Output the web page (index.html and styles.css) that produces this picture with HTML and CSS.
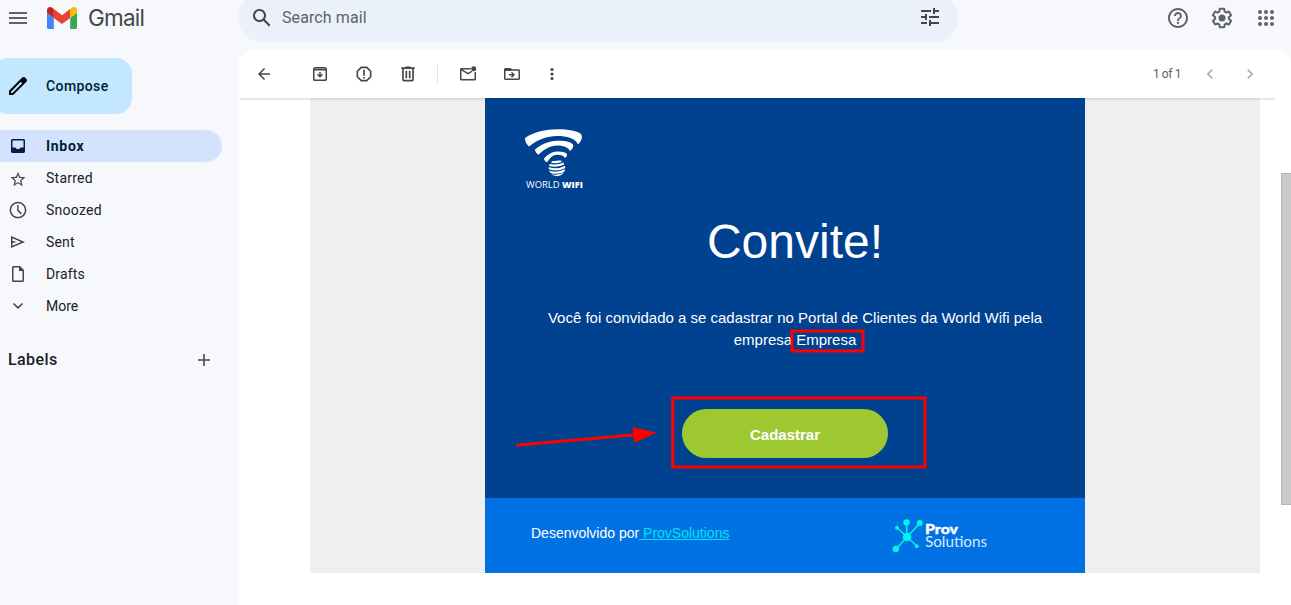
FILE: index.html
```html
<!DOCTYPE html>
<html lang="en">
<head>
<meta charset="utf-8">
<title>Gmail</title>
<link rel="stylesheet" href="styles.css">
</head>
<body>
<div class="app">
  <header class="header">
    <div class="brand">
      <svg class="icon24 menu" viewBox="0 0 24 24"><path d="M3 18h18v-2H3v2zm0-5h18v-2H3v2zm0-7v2h18V6H3z"/></svg>
      <svg class="brand-mark" viewBox="52 42 88 66"><path fill="#4285f4" d="M58 108h14V74L52 59v43c0 3.32 2.69 6 6 6"/><path fill="#34a853" d="M120 108h14c3.32 0 6-2.69 6-6V59l-20 15"/><path fill="#fbbc04" d="M120 48v26l20-15v-8c0-7.42-8.47-11.65-14.4-7.2"/><path fill="#ea4335" d="M72 74V48l24 18 24-18v26L96 92"/><path fill="#c5221f" d="M52 51v8l20 15V48l-5.6-4.2c-5.94-4.45-14.4-.22-14.4 7.2"/></svg>
      <span class="brand-name">Gmail</span>
    </div>
    <div class="search">
      <svg class="icon24" viewBox="0 0 24 24"><path d="M20.49 19l-5.73-5.73C15.53 12.2 16 10.91 16 9.5 16 5.91 13.09 3 9.5 3S3 5.91 3 9.5 5.91 16 9.5 16c1.41 0 2.7-.47 3.77-1.24L19 20.49 20.49 19zM5 9.5C5 7.01 7.01 5 9.5 5S14 7.01 14 9.5 11.99 14 9.5 14 5 11.99 5 9.5z"/></svg>
      <span class="search-text">Search mail</span>
      <svg class="icon24 tune" viewBox="0 0 24 24"><path d="M3 17v2h6v-2H3zM3 5v2h10V5H3zm10 16v-2h8v-2h-8v-2h-2v6h2zM7 9v2H3v2h4v2h2V9H7zm14 4v-2H11v2h10zm-6-4h2V7h4V5h-4V3h-2v6z"/></svg>
    </div>
    <div class="header-actions">
      <svg class="icon24" viewBox="0 0 24 24"><path d="M11 18h2v-2h-2v2zm1-16C6.48 2 2 6.48 2 12s4.48 10 10 10 10-4.480 10-10S17.520 2 12 2zm0 18c-4.410 0-8-3.590-8-8s3.590-8 8-8 8 3.590 8 8-3.590 8-8 8zm0-14c-2.210 0-4 1.790-4 4h2c0-1.100.9-2 2-2s2 .9 2 2c0 2-3 1.750-3 5h2c0-2.250 3-2.500 3-5 0-2.210-1.790-4-4-4z"/></svg>
      <svg class="icon24" viewBox="0 0 24 24"><path d="M13.850 22.250h-3.700c-.74 0-1.360-.54-1.450-1.270l-.27-1.890c-.27-.14-.53-.29-.79-.46l-1.800.72c-.7.26-1.470-.03-1.810-.65L2.200 15.530c-.35-.66-.2-1.440.36-1.880l1.530-1.190c-.01-.15-.02-.3-.02-.46 0-.15.010-.31.020-.46l-1.520-1.190c-.59-.45-.74-1.260-.37-1.880l1.850-3.190c.34-.62 1.110-.9 1.790-.63l1.810.73c.26-.17.520-.32.780-.46l.27-1.910c.09-.7.710-1.250 1.440-1.250h3.700c.74 0 1.360.54 1.450 1.270l.27 1.890c.27.140.53.290.79.460l1.800-.72c.71-.26 1.480.03 1.820.65l1.840 3.180c.36.66.2 1.440-.36 1.880l-1.520 1.190c.01.150.020.3.020.460s-.01.310-.02.460l1.520 1.190c.56.450.72 1.230.37 1.860l-1.860 3.220c-.34.620-1.110.9-1.800.63l-1.800-.72c-.26.170-.52.320-.78.460l-.27 1.910c-.1.680-.72 1.220-1.460 1.220zm-3.230-2h2.760l.37-2.550.53-.22c.44-.18.880-.44 1.340-.78l.45-.34 2.380.96 1.380-2.400-2.030-1.580.07-.56c.03-.26.060-.51.060-.78s-.03-.53-.06-.78l-.07-.56 2.030-1.580-1.390-2.400-2.390.96-.45-.35c-.42-.32-.87-.58-1.330-.77l-.52-.22-.37-2.550h-2.760l-.37 2.550-.53.210c-.44.190-.88.440-1.340.79l-.45.330-2.380-.95-1.390 2.390 2.030 1.580-.07.56a7 7 0 0 0-.06.790c0 .26.020.53.060.78l.07.560-2.030 1.580 1.380 2.400 2.390-.96.450.35c.43.330.86.580 1.330.77l.53.220z"/><circle cx="12" cy="12" r="3.500"/></svg>
      <svg class="icon24" viewBox="0 0 24 24"><g><circle cx="6" cy="6" r="2"/><circle cx="12" cy="6" r="2"/><circle cx="18" cy="6" r="2"/><circle cx="6" cy="12" r="2"/><circle cx="12" cy="12" r="2"/><circle cx="18" cy="12" r="2"/><circle cx="6" cy="18" r="2"/><circle cx="12" cy="18" r="2"/><circle cx="18" cy="18" r="2"/></g></svg>
    </div>
  </header>

  <aside class="sidebar">
    <div class="compose">
      <svg class="icon24" viewBox="0 0 24 24"><path d="M20.410 4.940l-1.350-1.350c-.78-.78-2.050-.78-2.830 0L3 16.820V21h4.180L20.410 7.770c.79-.78.790-2.050 0-2.830zM6.410 19.060L5 19v-1.360l9.820-9.820 1.410 1.410-9.820 9.830z"/></svg>
      <span class="compose-text">Compose</span>
    </div>
    <nav class="nav">
      <div class="nav-item active"><svg class="icon20" viewBox="0 0 20 20"><path d="M4.500 3h11c.8 0 1.500.7 1.500 1.500v11c0 .8-.7 1.500-1.500 1.500h-11c-.8 0-1.500-.7-1.500-1.500v-11C3 3.700 3.700 3 4.500 3zm0 1.500v7h3c.5 1 1.400 1.500 2.500 1.500s2-.5 2.500-1.500h3v-7z"/></svg><span class="t-inbox">Inbox</span></div>
      <div class="nav-item"><svg class="icon20 star" viewBox="0 0 24 24"><path d="M22 9.740l-7.190-.62L12 2.500 9.190 9.130 2 9.740l5.460 4.730-1.640 7.030L12 17.770l6.180 3.730-1.630-7.030L22 9.740zM12 15.900l-3.760 2.270 1-4.280-3.320-2.880 4.380-.38L12 6.600l1.710 4.040 4.380.38-3.320 2.880 1 4.280L12 15.900z"/></svg><span class="t-starred">Starred</span></div>
      <div class="nav-item"><svg class="icon20" viewBox="0 0 24 24"><path d="M12 2C6.500 2 2 6.500 2 12s4.500 10 10 10 10-4.500 10-10S17.500 2 12 2zm0 18.200c-4.500 0-8.200-3.700-8.200-8.200S7.500 3.800 12 3.800s8.200 3.700 8.200 8.200-3.700 8.200-8.200 8.200zM12.700 6H11v7l4.300 4.300 1.300-1.300-3.900-3.900V6z"/></svg><span class="t-snoozed">Snoozed</span></div>
      <div class="nav-item"><svg class="icon20" viewBox="0 0 20 20"><path d="M3 16V4l14 6-14 6zm1.500-2.300L13.100 10 4.500 6.300v2.600L9 10l-4.500 1.100z"/></svg><span class="t-sent">Sent</span></div>
      <div class="nav-item"><svg class="icon20" viewBox="0 0 20 20"><path d="M12 2H5.500C4.700 2 4 2.700 4 3.500v13c0 .8.7 1.500 1.500 1.500h9c.8 0 1.500-.7 1.500-1.500V6l-4-4zM5.500 16.500v-13H11V7h3.500v9.500z"/></svg><span class="t-drafts">Drafts</span></div>
      <div class="nav-item"><svg class="icon20" viewBox="0 0 20 20"><path d="M6.100 6.900L10 10.800l3.900-3.900 1.100 1.100-5 5-5-5z"/></svg><span class="t-more">More</span></div>
    </nav>
    <div class="labels">
      <span class="labels-text">Labels</span>
      <svg class="icon20" viewBox="0 0 20 20"><path d="M9.200 4h1.600v5.200H16v1.600h-5.200V16H9.200v-5.200H4V9.200h5.200z"/></svg>
    </div>
  </aside>

  <main class="main">
    <div class="toolbar">
      <svg class="icon20 back" viewBox="0 0 20 20"><path d="M16 9.250H6.900l4.200-4.200L10 4l-6 6 6 6 1.100-1.050-4.200-4.200H16z"/></svg>
      <svg class="icon20" viewBox="0 0 20 20"><path fill="#9a9c9c" d="M4.500 3.500h11v2h-11z"/><path d="M15.500 3h-11L3 4.800v10.700c0 .8.7 1.500 1.500 1.500h11c.8 0 1.500-.7 1.500-1.500V4.800zM5 4.200h10l.6.8H4.400zM4.500 15.500V6.500h11v9zM9.250 8v3L8 9.800l-1 1 3 3 3-3-1-1L10.750 11V8z"/></svg>
      <svg class="icon20" viewBox="0 0 24 24"><path d="M15.730 3H8.270L3 8.270v7.460L8.270 21h7.460L21 15.730V8.270L15.730 3zM19 14.900L14.900 19H9.100L5 14.900V9.100L9.100 5h5.800L19 9.100v5.800zM11 7h2v7h-2zm0 8.500h2v2h-2z"/></svg>
      <svg class="icon20" viewBox="0 0 24 24"><path d="M15 4V3H9v1H4v2h1v13c0 1.100.9 2 2 2h10c1.100 0 2-.9 2-2V6h1V4h-5zm2 15H7V6h10v13zM9 8h2v9H9zm4 0h2v9h-2z"/></svg>
      <span class="separator"></span>
      <svg class="icon20" viewBox="0 0 20 20"><path d="M18 8v7c0 .8-.7 1.500-1.500 1.500h-13c-.8 0-1.500-.7-1.500-1.500V5.500C2 4.700 2.700 4 3.500 4h9.200v1.500H4.500L10 8.800l3.500-2.100 1 1L10 10.500l-6.500-4V15h13V8z"/><circle cx="15.700" cy="4.800" r="2.500"/></svg>
      <svg class="icon20" viewBox="0 0 20 20"><path d="M16.500 5.200H10L8.500 4h-5C2.700 4 2 4.700 2 5.500V14.500c0 .8.700 1.500 1.500 1.500h13c.8 0 1.500-.7 1.500-1.500v-7.800c0-.8-.7-1.500-1.500-1.500zm0 9.300h-13V6.800h13zM10 13.700l3-3-3-3-1 1 1.200 1.250H7v1.500h3.200L9 12.700z"/><path d="M3 4.500h5.500L10 6.700H3z"/></svg>
      <svg class="icon20 dots" viewBox="0 0 20 20"><circle cx="10" cy="5.500" r="1.600"/><circle cx="10" cy="10" r="1.600"/><circle cx="10" cy="14.500" r="1.600"/></svg>
      <span class="pager">1 of 1</span>
      <svg class="icon20 faint" viewBox="0 0 24 24"><path d="M15.410 7.410L14 6l-6 6 6 6 1.410-1.410L10.830 12z"/></svg>
      <svg class="icon20 faint next" viewBox="0 0 24 24"><path d="M8.590 16.590L10 18l6-6-6-6-1.410 1.410L13.170 12z"/></svg>
    </div>
    <div class="viewport">
      <div class="mail-bg">
        <article class="mail">
          <section class="mail-body">
            <svg class="wifi-logo" viewBox="0 0 60 64" fill="#fff">
              <path d="M0 12C9 6 21 3.300 32 3.300c11 0 21 1.700 24 4.700 2 3 .5 7-3 10.500C51 12.500 42 10 32 10 22 10 12 14 4 20.500 1 18 0 15 0 12z"/>
              <path d="M10 23.500c6-5 14-8.500 22-8.700 8-.3 14 1.200 16 3.700 1 2-.5 4.500-3 6.500-2-4-7-5.500-13-5.500-7 0-13 4-18.500 9.200-2.500-1.700-3.500-3.500-3.500-5.200z"/>
              <path d="M19 32.500c4-4.500 8-6.800 13-7 5-.2 9 .8 10 2.500.4 1.500-.5 2.800-2 4-1.500-2.500-4-3.300-8-3.200-4 .1-7 3-10 7.500-2-1-3-2.300-3-3.800z"/>
              <clipPath id="globe"><circle cx="32" cy="42" r="8.300"/></clipPath>
              <g clip-path="url(#globe)" fill="none" stroke="#fff" stroke-width="2.100"><path d="M26 35.500q6 2 13-2"/><path d="M22 38q10 4 20-2"/><path d="M22 41.500q10 4.500 20-1.500"/><path d="M22 45q10 4 20-1.500"/><path d="M22 48q10 4 20-1.500"/></g>
              <text x="1" y="62.300" font-size="9.500" textLength="33.500" lengthAdjust="spacingAndGlyphs">WORLD</text>
              <text x="37" y="62.300" font-size="9.500" font-weight="800" textLength="21" lengthAdjust="spacingAndGlyphs">WIFI</text>
            </svg>
            <h1 class="title">Convite!</h1>
            <p class="invite">Você foi convidado a se cadastrar no Portal de Clientes da World Wifi pela<br>empresa <span class="company">Empresa</span></p>
            <div class="cta-row"><a class="cta">Cadastrar</a></div>
            <svg class="marks" viewBox="0 0 600 400"><g fill="none" stroke="#f00" stroke-width="3"><rect x="307" y="233" width="71" height="20"/><rect x="187.800" y="300" width="252.200" height="69"/><path d="M31 347.200L150 336.700"/></g><path fill="#f00" d="M147.500 329L171.500 334.800 149 345z"/></svg>
          </section>
          <footer class="mail-footer">
            <span class="credit">Desenvolvido por<a class="credit-link"> ProvSolutions</a></span>
            <svg class="prov-logo" viewBox="0 0 100 40">
              <g stroke="#00f5e6" stroke-width="1.500"><path d="M17 22L16.500 7M17 22L30 8M17 22L7 12.500M17 22L6 34M17 22l10 9"/></g>
              <g fill="#00f5e6"><circle cx="17" cy="22" r="4.300"/><circle cx="16.500" cy="7.500" r="3.200"/><circle cx="29.800" cy="8" r="3"/><circle cx="7" cy="12.800" r="2"/><circle cx="5.800" cy="34" r="3.200"/><circle cx="26.700" cy="31.300" r="2"/></g>
              <g fill="#fff"><text x="35" y="19" font-size="14" font-weight="900" stroke="#fff" stroke-width=".4" textLength="33" lengthAdjust="spacingAndGlyphs">Prov</text><text x="35" y="32" font-size="14.500" fill="#d9ebff" font-weight="400" textLength="62" lengthAdjust="spacingAndGlyphs">Solutions</text></g>
            </svg>
          </footer>
        </article>
      </div>
      <div class="scrollbar"></div>
    </div>
  </main>
</div>
</body>
</html>
```
FILE: styles.css
```css
* { box-sizing: border-box; }
body {
  margin: 0;
  width: 1291px;
  height: 605px;
  overflow: hidden;
  background: #f6f8fc;
  color: #202124;
  font-family: Roboto, "Open Sans", sans-serif;
}
svg { display: block; flex: none; }
.icon24 { width: 24px; height: 24px; fill: #444746; }
.icon20 { width: 20px; height: 20px; fill: #444746; }
.app {
  display: grid;
  grid-template: 50px 555px / 238px 1053px;
}
.header { grid-column: 1 / 3; display: flex; align-items: flex-start; }
.brand {
  display: flex;
  align-items: center;
  width: 238px;
  height: 36px;
  padding-left: 6px;
}
.menu { fill: #5f6368; }
.brand-mark { width: 30px; height: 22.500px; margin-left: 17px; }
.brand-name {
  margin-left: 11px;
  font-family: Inter, sans-serif;
  font-size: 22.500px;
  line-height: 36px;
  letter-spacing: -0.8px;
  color: #444746;
}
.search {
  display: flex;
  align-items: center;
  width: 720px;
  height: 48px;
  margin-top: -6px;
  padding: 0 16px 0 12px;
  border-radius: 24px;
  background: #eaf1fb;
}
.tune { margin-bottom: 2px; }
.search-text {
  flex: 1;
  margin: 0 0 2px 8px;
  font-size: 16px;
  letter-spacing: 0.1px;
  color: #5f6368;
}
.header-actions {
  display: flex;
  gap: 20px;
  margin-left: auto;
  padding: 6px 13px 0 0;
}
.header-actions .icon24 { fill: #5f6368; }
.sidebar { padding-top: 8px; font-size: 14px; }
.compose {
  display: flex;
  align-items: center;
  gap: 16px;
  width: 140px;
  height: 56px;
  margin-left: -8px;
  padding-left: 14px;
  border-radius: 16px;
  background: #c2e7ff;
  color: #001d35;
  font-weight: 500;
}
.compose .icon24 { fill: #000; }
.compose-text { letter-spacing: 0.4px; }
.nav { margin-top: 16px; }
.nav-item {
  display: flex;
  align-items: center;
  gap: 18px;
  width: 222px;
  height: 32px;
  padding-left: 8px;
}
.nav-item.active {
  border-radius: 0 16px 16px 0;
  background: #d3e3fd;
  color: #001d35;
  font-weight: 700;
}
.active .icon20 { fill: #041e49; }
.star { width: 18px; height: 18px; margin: 2px 1px 0; }
.t-inbox { letter-spacing: 0.7px; }
.t-starred, .t-snoozed { letter-spacing: 0.25px; }
.t-sent, .t-drafts { letter-spacing: 0.15px; }
.labels {
  display: flex;
  align-items: center;
  justify-content: space-between;
  height: 40px;
  margin-top: 18px;
  padding: 0 24px 0 8px;
}
.labels-text { margin-bottom: 2px; font-size: 16px; font-weight: 500; letter-spacing: 0.4px; }
.main {
  overflow: hidden;
  border-radius: 16px 16px 0 0;
  background: #fff;
}
.toolbar {
  display: flex;
  align-items: center;
  gap: 24px;
  width: 1037px;
  height: 48px;
  padding: 0 16px;
}
.back { margin-right: 12px; }
.separator { width: 1px; height: 20px; margin: 0 -4px 0 -5px; background: #e2e4e6; }
.dots { margin-left: -4px; }
.pager { margin-left: auto; margin-right: -5px; font-size: 12px; letter-spacing: -0.4px; color: #5e5e5e; }
.faint { fill: #aeb0b0; }
.next { margin-left: -4px; margin-right: -1px; }
.viewport {
  position: relative;
  display: flex;
  height: 507px;
  padding-left: 72px;
}
/* Toolbar shadow, visible on the white and grey areas beside the message */
.viewport::before {
  content: "";
  position: absolute;
  top: 0;
  left: 2px;
  width: 1035px;
  height: 3px;
  background: linear-gradient(rgba(0, 0, 0, 0.13), rgba(0, 0, 0, 0));
}
.mail-bg {
  display: flex;
  justify-content: center;
  width: 950px;
  height: 475px;
  background: #efefef;
}
.mail {
  width: 600px;
  font-family: "Liberation Sans", Arial, sans-serif;
  color: #fff;
}
.mail-body {
  position: relative;
  height: 400px;
  padding-top: 28px;
  background: #004190;
}
.wifi-logo { width: 60px; height: 64px; margin-left: 40px; overflow: visible; font-family: "Open Sans", sans-serif; }
.title {
  margin: 24px 0 0;
  padding-left: 20px;
  text-align: center;
  font-size: 48px;
  font-weight: 400;
  line-height: 56px;
}
.invite {
  margin: 37px 0 0;
  padding-left: 20px;
  text-align: center;
  font-size: 15px;
  line-height: 22px;
}
.cta-row { display: flex; justify-content: center; margin-top: 58px; }
.cta {
  width: 206px;
  height: 49px;
  border-radius: 25px;
  background: #9dc831;
  text-align: center;
  font-size: 15px;
  font-weight: 700;
  line-height: 52px;
}
/* Annotations drawn over the message */
.marks { position: absolute; inset: 0; width: 600px; height: 400px; }
.mail-footer {
  display: flex;
  align-items: flex-start;
  justify-content: space-between;
  height: 75px;
  padding: 17px 95px 0 46px;
  background: #0072e3;
}
.credit { font-size: 14px; line-height: 36px; white-space: pre; }
.credit-link { color: #00e5f2; text-decoration: underline; }
.prov-logo { width: 100px; height: 40px; font-family: Lato, sans-serif; }
.scrollbar {
  width: 10px;
  height: 332px;
  margin: 75px 0 0 auto;
  border: 1px solid #b5b5b5;
  border-right: 0;
  background: #cacaca;
}
```
